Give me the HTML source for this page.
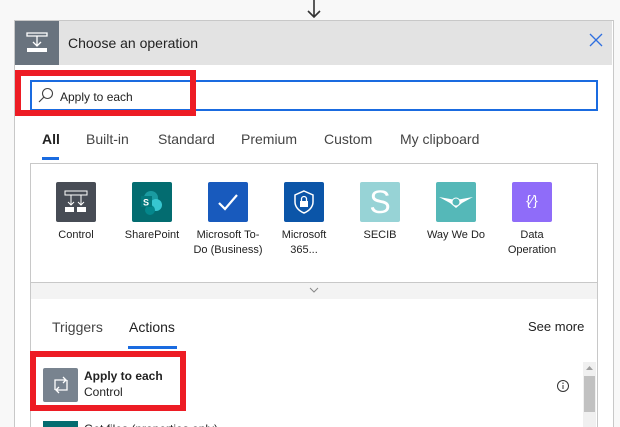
<!DOCTYPE html><html><head><style>
html,body{margin:0;width:620px;height:427px;overflow:hidden}
body{background:#f8f8f8;font-family:"Liberation Sans",sans-serif;position:relative;color:#222}
.a{position:absolute}
.lbl{position:absolute;width:70px;text-align:center;font-size:11px;line-height:15px;color:#222}
.ic{position:absolute;top:182px;width:40px;height:40px;border-radius:2px}
.tab{position:absolute;top:131px;font-size:14px;color:#444}
</style></head><body>
<svg class="a" style="left:305px;top:0" width="18" height="20"><path d="M9 0V17M3 11L9 17L15 11" stroke="#333" stroke-width="1.6" fill="none"/></svg>
<div class="a" style="left:14px;top:20px;width:598px;height:420px;background:#fff;border:1px solid #c8c8c8"></div>
<div class="a" style="left:15px;top:21px;width:597px;height:44px;background:#e3e3e3"></div>
<div class="a" style="left:15px;top:21px;width:44px;height:44px;background:#69737e"></div>
<svg class="a" style="left:25px;top:31px" width="24" height="24"><path d="M2 2H22V5H2Z M12 5V15M8 11L12 15L16 11" stroke="#fff" stroke-width="1.3" fill="none"/><rect x="2" y="17" width="20" height="4" fill="#fff"/></svg>
<div class="a" style="left:68px;top:35px;font-size:14px;color:#222">Choose an operation</div>
<svg class="a" style="left:589px;top:33px" width="14" height="14"><path d="M1 1L13 13M13 1L1 13" stroke="#2f6fe0" stroke-width="1.3"/></svg>
<div class="a" style="left:30px;top:80px;width:564px;height:27px;border:2px solid #1a6be0;background:#fff"></div>
<svg class="a" style="left:38px;top:87px" width="16" height="16"><circle cx="9.5" cy="6.5" r="5" stroke="#444" stroke-width="1.1" fill="none"/><path d="M6 10L1 15" stroke="#444" stroke-width="1.2"/></svg>
<div class="a" style="left:60px;top:90px;font-size:12px;color:#222">Apply to each</div>
<div class="a" style="left:15px;top:70px;width:169px;height:34px;border:6px solid #ed1c24"></div>
<div class="tab" style="left:42px;color:#222;font-weight:bold">All</div>
<div class="tab" style="left:86px">Built-in</div>
<div class="tab" style="left:158px">Standard</div>
<div class="tab" style="left:241px">Premium</div>
<div class="tab" style="left:324px">Custom</div>
<div class="tab" style="left:400px">My clipboard</div>
<div class="a" style="left:42px;top:157px;width:17px;height:3px;background:#1a6be0"></div>
<div class="a" style="left:30px;top:163px;width:566px;height:136px;border:1px solid #c8c8c8;background:#fff"></div>
<div class="a" style="left:31px;top:282px;width:566px;height:17px;background:#f3f3f3;border-top:1px solid #c8c8c8"></div>
<svg class="a" style="left:309px;top:287px" width="10" height="6"><path d="M1 1L5 5L9 1" stroke="#888" fill="none"/></svg>
<div class="ic" style="left:56px;background:#474c55"></div>
<svg class="a" style="left:62px;top:189px" width="28" height="26"><path d="M3 2H25V6H3Z M9 6V16M19 6V16M6 13L9 16L12 13M16 13L19 16L22 13" stroke="#fff" fill="none"/><rect x="3" y="18" width="9" height="5" fill="#fff"/><rect x="15" y="18" width="9" height="5" fill="#fff"/></svg>
<div class="ic" style="left:132px;background:#036c70"></div>
<svg class="a" style="left:138px;top:188px" width="28" height="28"><circle cx="13" cy="10" r="7" fill="#1a9ba1"/><circle cx="18" cy="17" r="6" fill="#37c6d0"/><circle cx="12" cy="22" r="5" fill="#04878c"/><rect x="3" y="8" width="11" height="11" fill="#03787c"/><text x="5" y="17.5" font-size="9" font-weight="bold" fill="#fff" font-family="Liberation Sans">S</text></svg>
<div class="ic" style="left:208px;background:#185abd"></div>
<svg class="a" style="left:216px;top:190px" width="24" height="24"><path d="M3 13L9 19L21 5" stroke="#fff" stroke-width="2.2" fill="none"/></svg>
<div class="ic" style="left:284px;background:#0b55a8"></div>
<svg class="a" style="left:292px;top:189px" width="24" height="26"><path d="M12 2L21 6V13C21 18 17 22 12 24C7 22 3 18 3 13V6Z" stroke="#fff" stroke-width="1.5" fill="none"/><rect x="8" y="12" width="8" height="6" fill="#fff"/><path d="M9.5 12V10A2.5 2.5 0 0 1 14.5 10V12" stroke="#fff" stroke-width="1.3" fill="none"/></svg>
<div class="ic" style="left:360px;background:#97d3d6"></div>
<div class="a" style="left:360px;top:182px;width:40px;text-align:center;font-size:32px;line-height:40px;color:#fff">S</div>
<div class="ic" style="left:436px;background:#55b8b8"></div>
<svg class="a" style="left:438px;top:192px" width="36" height="20"><path d="M1 5L18 8L35 5L24 11L18 16L12 11Z" fill="#fff"/><circle cx="18" cy="10" r="4" fill="#55b8b8" stroke="#fff"/></svg>
<div class="ic" style="left:512px;background:#8f6cf9"></div>
<div class="a" style="left:512px;top:192px;width:40px;text-align:center;font-size:14px;color:#fff">{⁄}</div>
<div class="lbl" style="left:41px;top:228px">Control</div>
<div class="lbl" style="left:117px;top:228px">SharePoint</div>
<div class="lbl" style="left:193px;top:228px">Microsoft To-Do (Business)</div>
<div class="lbl" style="left:269px;top:228px">Microsoft<br>365...</div>
<div class="lbl" style="left:345px;top:228px">SECIB</div>
<div class="lbl" style="left:421px;top:228px">Way We Do</div>
<div class="lbl" style="left:497px;top:228px">Data<br>Operation</div>
<div class="a" style="left:30px;top:299px;width:566px;height:140px;border:1px solid #c8c8c8;border-top:none;background:#fff"></div>
<div class="tab" style="left:52px;top:319px">Triggers</div>
<div class="tab" style="left:129px;top:319px;color:#222">Actions</div>
<div class="a" style="left:528px;top:319px;font-size:13px;color:#222">See more</div>
<div class="a" style="left:128px;top:346px;width:49px;height:3px;background:#1a6be0"></div>
<div class="a" style="left:583px;top:362px;width:13px;height:65px;background:#f0f0f0"></div>
<div class="a" style="left:584px;top:376px;width:11px;height:36px;background:#c1c1c1"></div>
<svg class="a" style="left:585px;top:365px" width="9" height="6"><path d="M1 5L4.5 1L8 5Z" fill="#a0a0a0"/></svg>
<div class="a" style="left:43px;top:368px;width:35px;height:34px;background:#78838f;border-radius:2px"></div>
<svg class="a" style="left:51px;top:376px" width="20" height="18"><path d="M4 14V4H15M12 1L15 4L12 7M16 4V14H5M8 11L5 14L8 17" stroke="#fff" stroke-width="1.3" fill="none"/></svg>
<div class="a" style="left:84px;top:369px;font-size:12px;font-weight:bold;color:#222">Apply to each</div>
<div class="a" style="left:84px;top:385px;font-size:12px;color:#222">Control</div>
<svg class="a" style="left:556px;top:379px" width="14" height="14"><circle cx="7" cy="7" r="5.5" stroke="#333" fill="none"/><path d="M7 6V10" stroke="#333"/><circle cx="7" cy="4.2" r=".7" fill="#333"/></svg>
<div class="a" style="left:43px;top:421px;width:35px;height:10px;background:#036c70"></div>
<div class="a" style="left:84px;top:422px;font-size:12px;color:#222">Get files (properties only)</div>
<div class="a" style="left:30px;top:351px;width:144px;height:48px;border:6px solid #ed1c24"></div>
</body></html>
